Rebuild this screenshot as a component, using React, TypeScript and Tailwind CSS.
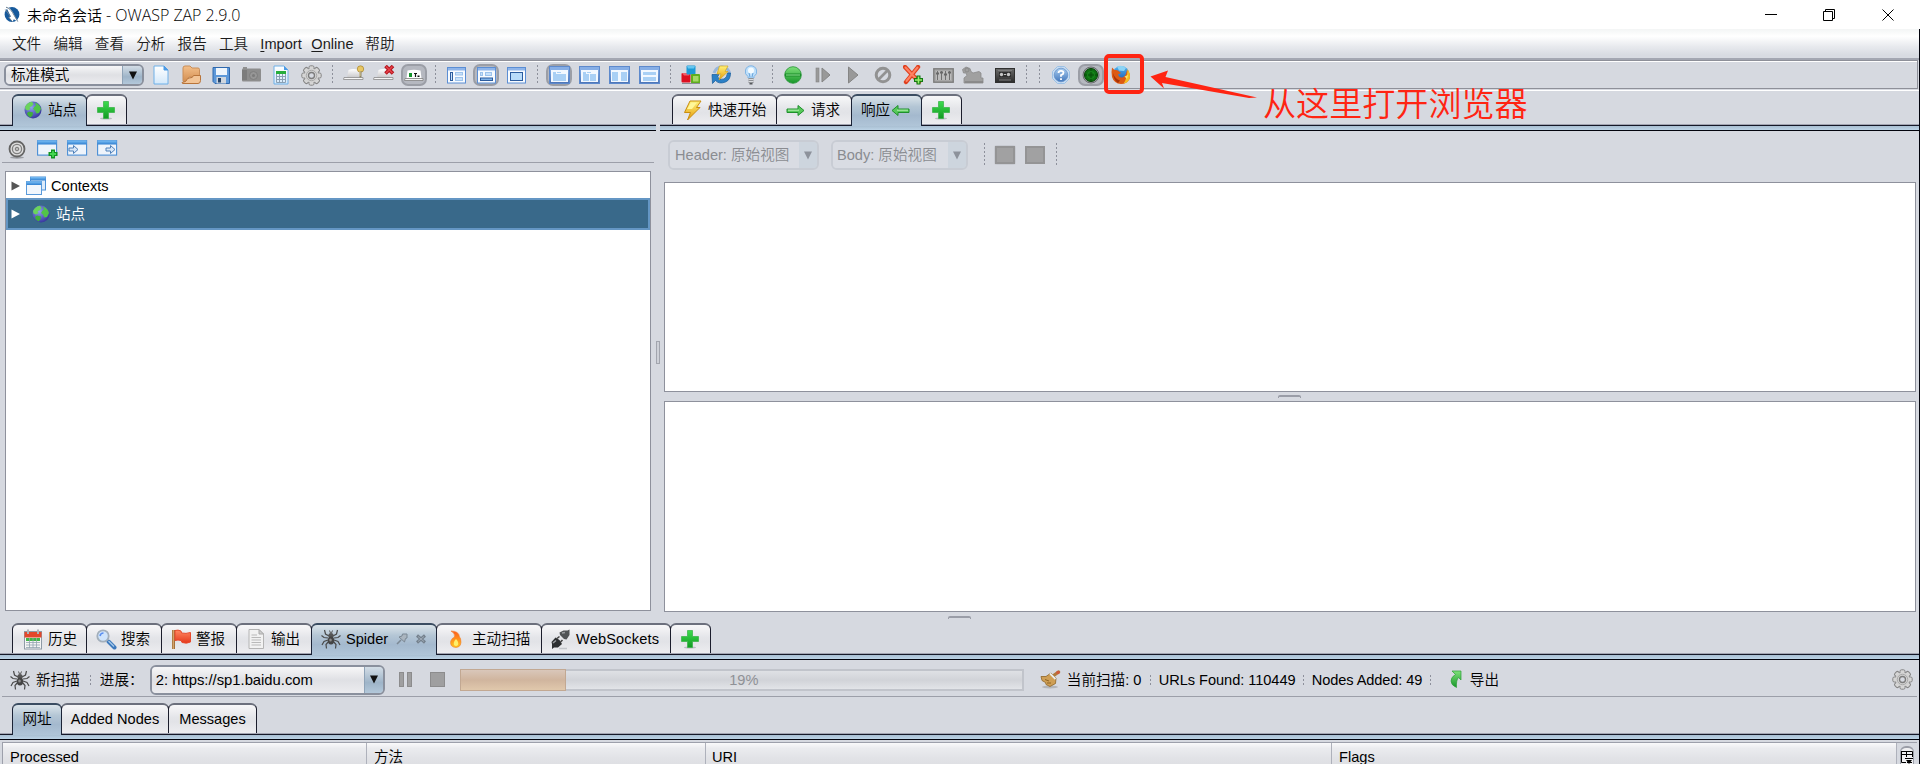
import React from "react";

type Kids = { children?: React.ReactNode };

function Svg({ w = 20, h = 20, children, className = "" }: Kids & { w?: number; h?: number; className?: string }) {
  return (
    <svg width={w} height={h} viewBox={`0 0 ${w} ${h}`} fill="none" className={`shrink-0 ${className}`}>
      {children}
    </svg>
  );
}

function Gradients() {
  const list: [string, string, string][] = [
    ["gDoc", "#ffffff", "#d3e8fa"],
    ["gFolder", "#f3bf8a", "#d08a4c"],
    ["gBlue", "#8ab4ec", "#4a72b4"],
    ["gWin", "#7cc0f6", "#2f7fd0"],
    ["gGreen", "#7fe07a", "#17962a"],
    ["gBolt", "#fff27a", "#e59a08"],
    ["gPlus", "#3ddc4e", "#129a22"],
    ["gHat", "#ffffff", "#c9c9cb"],
    ["gRed", "#ff8a63", "#e5381c"],
    ["gHelp", "#a9cdf0", "#4378bd"],
    ["gFlame", "#ff5a1c", "#ffc81e"],
    ["gFox", "#4fb4f0", "#1c4fa8"],
    ["gTape", "#6a6a6a", "#2c2c2c"],
  ];
  return (
    <svg width="0" height="0" className="absolute">
      <defs>
        {list.map(([id, a, b]) => (
          <linearGradient key={id} id={id} x1="0" y1="0" x2="0" y2="1">
            <stop offset="0" stopColor={a} />
            <stop offset="1" stopColor={b} />
          </linearGradient>
        ))}
        <radialGradient id="gGlobe" cx="0.4" cy="0.35" r="0.7">
          <stop offset="0" stopColor="#8fa2ee" />
          <stop offset="1" stopColor="#33309a" />
        </radialGradient>
      </defs>
    </svg>
  );
}

/* ---------- icons ---------- */

const Zap = () => (
  <Svg w={16} h={17}>
    <circle cx="8" cy="8.5" r="7.4" fill="#175a9c" />
    <path d="M2.2 1.2 6 2.4 9 6.5 13.6 15.6 9.8 13.2 8.6 15.8 5 11.4 6.8 10.6Z" fill="#fff" />
    <path d="M2 1.2C5 2 7 4 8.6 6.6L13.8 15.6M1.4 3.6 6.4 10.4 4.8 11.4 8.4 15.6" stroke="#6b7f92" strokeWidth="1" />
  </Svg>
);
const NewDoc = () => (
  <Svg w={16}>
    <path d="M1 1H11L15 5V19H1Z" fill="url(#gDoc)" stroke="#6fb0e8" />
    <path d="M11 1V5H15Z" fill="#4d9be6" stroke="#4d9be6" />
  </Svg>
);
const Folder = () => (
  <Svg>
    <path d="M2 16V3Q2 1 4 1H9L11 3H17Q18.500 3 18.500 4.500V12H8L5 18Z" fill="url(#gFolder)" stroke="#c98d58" />
    <path d="M1 17.500Q5.500 17 6 14.500Q6.500 13 8.500 13Q12 13 12.500 10.500H19.500V15.500Q19.500 18.500 17 18.500H1.500Z" fill="#f2c496" stroke="#b8743a" />
  </Svg>
);
const Save = () => (
  <Svg w={19}>
    <path d="M1 2.500H17.500V18.500H3L1 16.500Z" fill="#5d98d9" stroke="#2f68ae" />
    <rect x="4" y="3" width="11" height="7" fill="#eef5fc" />
    <rect x="4.500" y="12" width="9.500" height="6.500" fill="#cfd6de" />
    <rect x="6" y="13" width="3" height="4.500" fill="#25446c" />
  </Svg>
);
const Camera = () => (
  <Svg w={21}>
    <rect x="1" y="3.500" width="19" height="13" rx="1" fill="#8d8d8d" />
    <rect x="1" y="5" width="5" height="10" fill="#7c7c7c" />
    <circle cx="12.500" cy="10.500" r="4" fill="#969696" stroke="#7e7e7e" />
    <circle cx="12.500" cy="10.500" r="1.500" fill="#7b7b7b" />
    <rect x="2" y="2" width="4" height="2" fill="#909090" />
  </Svg>
);
const Sheet = () => (
  <Svg w={16}>
    <path d="M1 1H11L15 5V19H1Z" fill="url(#gDoc)" stroke="#6fb0e8" />
    <path d="M11 1V5H15Z" fill="#4d9be6" />
    <rect x="3" y="6" width="10" height="3" fill="#27ad3c" />
    <path d="M3.500 9V17.500H12.500V9M3 11.500H13M3 14.500H13M6.500 9V17M9.500 9V17" stroke="#8aa0b4" />
  </Svg>
);
const Gear = () => (
  <Svg w={21} h={21}>
    {[0, 45, 90, 135].map((a) => (
      <rect key={a} x="8" y="0.800" width="5" height="19.400" rx="1.500" fill="#d6d6d6" stroke="#858585" strokeWidth="1" transform={`rotate(${a} 10.5 10.5)`} />
    ))}
    <circle cx="10.500" cy="10.500" r="7" fill="#d2d2d2" />
    <circle cx="10.500" cy="10.500" r="5.200" stroke="#a0a0a0" strokeWidth="0.800" />
    <circle cx="10.500" cy="10.500" r="3" fill="#d7dae1" stroke="#7c7c7c" strokeWidth="1.300" />
  </Svg>
);
const HatBase = () => (
  <>
    <path d="M4 12.500 5.500 5Q10 3 15.500 5L17 12.500Z" fill="url(#gHat)" />
    <path d="M1 12.500H20V14.500H0.500Z" fill="#f6f6f6" stroke="#8a8a8a" strokeWidth="0.800" />
  </>
);
const HatKey = () => (
  <Svg w={22}>
    <HatBase />
    <circle cx="17.500" cy="4" r="3.200" fill="#e8c765" stroke="#a8842a" strokeWidth="0.700" />
    <path d="M17.500 6V12.500" stroke="#8c8468" strokeWidth="2" />
    <path d="M17 6V11" stroke="#f1dea0" strokeWidth="0.800" />
  </Svg>
);
const HatX = () => (
  <Svg w={22}>
    <HatBase />
    <path d="M12.500 1 20 8.500M20 1 12.500 8.500" stroke="#b3141d" strokeWidth="3.600" />
    <path d="M13 1.500 19.500 8M19.500 1.500 13 8" stroke="#e8434a" strokeWidth="1.500" />
  </Svg>
);
const Terminal = () => (
  <Svg w={22}>
    <path d="M3.500 13.500 4.500 5.500Q11 4 17.500 5.500L18.500 13.500Z" fill="#fff" />
    <path d="M2 13.500H20V15.500H1.500Z" fill="#f6f6f6" stroke="#808080" strokeWidth="0.800" />
    <rect x="6" y="8" width="3" height="4" fill="#14942c" />
    <path d="M11 8.500H14M12.500 8V12" stroke="#111" strokeWidth="1.200" />
    <rect x="14.500" y="10.500" width="2" height="1.500" fill="#111" />
  </Svg>
);
const LayoutFrame = ({ children }: Kids) => (
  <Svg w={19} h={17}>
    <rect x="0.500" y="0.500" width="18" height="15.500" fill="#f7fbff" stroke="#5b8ed4" />
    <rect x="1" y="1" width="17" height="2.500" fill="#8fb5ea" />
    {children}
  </Svg>
);
const Layout1 = () => (
  <LayoutFrame>
    <rect x="3.500" y="5.500" width="2" height="8" fill="#c8e1fa" stroke="#2c5c9e" />
    <rect x="8.500" y="5.500" width="7" height="2.500" fill="#c8e1fa" stroke="#9dc3ec" />
    <rect x="8.500" y="10.500" width="7" height="3" fill="#c8e1fa" stroke="#9dc3ec" />
  </LayoutFrame>
);
const Layout2 = () => (
  <LayoutFrame>
    <rect x="3.500" y="5.500" width="2" height="3" fill="#c8e1fa" stroke="#9dc3ec" />
    <rect x="8.500" y="5.500" width="6" height="3" fill="#c8e1fa" stroke="#9dc3ec" />
    <rect x="3.500" y="11" width="12" height="2.500" fill="#7fb2e8" stroke="#2c5c9e" />
  </LayoutFrame>
);
const Layout3 = () => (
  <LayoutFrame>
    <rect x="3.500" y="5.500" width="12" height="8" fill="#b8dcfa" stroke="#2c5c9e" />
  </LayoutFrame>
);
const PanelFrame = ({ children }: Kids) => (
  <Svg w={21} h={18}>
    <rect width="21" height="18" fill="url(#gBlue)" />
    <rect x="0.500" y="0.500" width="20" height="17" stroke="#5d89cc" />
    <rect x="1" y="1" width="19" height="3" fill="#86aee6" />
    <rect x="2" y="4" width="17" height="12" fill="#f2f8ff" />
    {children}
  </Svg>
);
const Panel1 = () => (
  <PanelFrame>
    <rect x="4" y="8" width="13" height="7" fill="#a9d0f5" />
    <rect x="4" y="6" width="3" height="2" fill="#a9d0f5" />
    <rect x="8" y="6" width="4" height="1" fill="#a9d0f5" />
  </PanelFrame>
);
const Panel2 = () => (
  <PanelFrame>
    <rect x="4" y="8" width="6" height="7" fill="#a9d0f5" />
    <rect x="11" y="8" width="6" height="7" fill="#a9d0f5" />
    <rect x="4" y="6" width="3" height="2" fill="#a9d0f5" />
    <rect x="8" y="6" width="4" height="1" fill="#a9d0f5" />
  </PanelFrame>
);
const Panel3 = () => (
  <PanelFrame>
    <rect x="3" y="6" width="6" height="9" fill="#a9d0f5" />
    <rect x="12" y="6" width="6" height="9" fill="#a9d0f5" />
  </PanelFrame>
);
const Panel4 = () => (
  <PanelFrame>
    <rect x="4" y="6" width="13" height="3" fill="#a9d0f5" />
    <rect x="4" y="11" width="13" height="4" fill="#a9d0f5" />
  </PanelFrame>
);
const Cubes = () => (
  <Svg>
    <rect x="0.500" y="8" width="9" height="9.500" rx="1" fill="#dc1020" />
    <path d="M1 8H9L8 10.500H3Z" fill="#f0606a" />
    <rect x="5.500" y="0.500" width="9" height="9" rx="1" fill="#1d9ad6" />
    <path d="M6 1H14L13 3.500H7Z" fill="#66c6f0" />
    <rect x="10" y="9" width="9" height="9.500" rx="1" fill="#5fae1e" />
    <rect x="12" y="11" width="5.500" height="5.500" fill="#a5d966" />
    <path d="M1 18.500H19" stroke="#8b8e96" />
  </Svg>
);
const Update = () => (
  <Svg w={21}>
    <path d="M3 8Q5 2 11 2Q18 3 18.500 9" stroke="#98b7dc" strokeWidth="3" />
    <path d="M1 9.500H8L6.500 12Q9 15.500 13 14Q16 12.500 16.500 8H19.500Q19.500 15 14.500 17Q8 19.500 4.500 15.500L1.500 18.500Z" fill="#2b80c6" stroke="#145a9a" strokeWidth="0.700" />
    <path d="M8.500 1H17L14 6.500H17L8 15 10 9H6Z" fill="url(#gBolt)" stroke="#d3a81c" strokeWidth="0.700" />
  </Svg>
);
const Bulb = () => (
  <Svg w={14}>
    <path d="M7 0.800A5.800 5.800 0 0 1 10 11.500V13H4V11.500A5.800 5.800 0 0 1 7 0.800Z" fill="#bfe0fb" stroke="#7fb4e4" />
    <circle cx="7" cy="5.500" r="3" fill="#f4fbff" />
    <path d="M5 8 6 12M9 8 8 12" stroke="#4f93d2" strokeWidth="0.800" />
    <rect x="4.500" y="13" width="5" height="5" fill="#8f9296" />
    <path d="M4.500 14.500H9.500M4.500 16.500H9.500" stroke="#d9dbdf" />
    <rect x="5.500" y="18" width="3" height="1.500" fill="#55585c" />
  </Svg>
);
const GreenBall = () => (
  <Svg w={18} h={18}>
    <circle cx="9" cy="9" r="8.300" fill="url(#gGreen)" stroke="#239334" strokeWidth="0.800" />
    <rect x="1" y="7.500" width="16" height="3" fill="#1a8c2a" />
    <rect x="2" y="8.500" width="14" height="1" fill="#8fe392" />
  </Svg>
);
const Step = () => (
  <Svg w={16}>
    <rect x="1" y="3" width="3" height="14" fill="#999" stroke="#858585" strokeWidth="0.600" />
    <path d="M7 3V17L15 10Z" fill="#999" stroke="#858585" />
  </Svg>
);
const Play = () => (
  <Svg w={12}>
    <path d="M1.500 2V18L11 10Z" fill="#999" stroke="#858585" />
  </Svg>
);
const Ban = () => (
  <Svg w={18} h={18}>
    <circle cx="9" cy="9" r="6.800" stroke="#929292" strokeWidth="3" />
    <path d="M4.500 13.500 13.500 4.500" stroke="#929292" strokeWidth="2.600" />
  </Svg>
);
const BreakX = () => (
  <Svg>
    <path d="M2 2 16 17M15 2 3 17" stroke="#e0401f" strokeWidth="4.400" strokeLinecap="round" />
    <path d="M2.500 2.500 15 16M14.500 2.500 3.500 16" stroke="#ff8262" strokeWidth="2" strokeLinecap="round" />
    <path d="M15.500 10.500V19.500M11 15H20" stroke="#127a12" strokeWidth="4" />
    <path d="M15.500 11.500V18.500M12 15H19" stroke="#9af06c" strokeWidth="1.600" />
  </Svg>
);
const Sliders = () => (
  <Svg w={21} h={17}>
    <rect x="0.800" y="1.800" width="19.400" height="13.400" fill="#a8a8a8" stroke="#7c7c7c" strokeWidth="1.400" />
    <rect x="3" y="4" width="15" height="9" fill="#bcbcbc" />
    <path d="M4.500 4V13M8.500 4V13M12.500 4V13M16.500 4V13" stroke="#707070" />
    <path d="M3 6.500H6M7 5.500H10M11 7.500H14M15 5.500H18" stroke="#686868" strokeWidth="1.800" />
  </Svg>
);
const Snail = () => (
  <Svg w={24}>
    <path d="M3 18V13L6 10.500 5 8H2.500L1.500 4.500 5 2 9 3.500 10 6.500 12 8 18 6.500 20 8V13H22V18Z" fill="#a0a0a0" stroke="#8a8a8a" strokeWidth="0.800" />
    <path d="M4 17H22" stroke="#858585" strokeWidth="1.500" />
    <circle cx="6" cy="5" r="2" stroke="#8a8a8a" />
  </Svg>
);
const Tape = () => (
  <Svg w={20} h={17}>
    <rect x="0.500" y="1.500" width="19" height="14" fill="url(#gTape)" stroke="#303030" />
    <rect x="4" y="5" width="12" height="5" fill="#303030" />
    <circle cx="6.500" cy="7.500" r="1.700" fill="#c6c6c6" />
    <circle cx="13.500" cy="7.500" r="1.700" fill="#c6c6c6" />
    <rect x="9" y="7" width="2" height="1" fill="#c6c6c6" />
    <path d="M3 3.500H17M4 13H16" stroke="#7d7d7d" />
  </Svg>
);
const Help = () => (
  <Svg w={18} h={18}>
    <path d="M5.500 0.500H12.500L17.500 5.500V12.500L12.500 17.500H5.500L0.500 12.500V5.500Z" fill="#c7dcf2" stroke="#9cc0e4" />
    <circle cx="9" cy="9" r="6.800" fill="url(#gHelp)" stroke="#5e8cc6" strokeWidth="0.700" />
    <path d="M6.500 7Q6.500 4.800 9 4.800Q11.500 4.800 11.500 6.800Q11.500 8.300 9 9.200V10.800M9 12.200V14" stroke="#fff" strokeWidth="1.800" />
  </Svg>
);
const Radar = () => (
  <Svg w={18} h={18}>
    <circle cx="9" cy="9" r="8" fill="#9da0a3" stroke="#6c6f72" />
    <circle cx="9" cy="9" r="6.500" fill="#0e7212" stroke="#064408" />
    <path d="M9 2V16M2 9H16" stroke="#084c0b" />
    <circle cx="9" cy="9" r="3.500" stroke="#1d8f22" strokeWidth="0.800" />
  </Svg>
);
const Firefox = () => (
  <Svg>
    <circle cx="10" cy="9.500" r="8.500" fill="url(#gFox)" />
    <path d="M6 1.500Q11-0.500 15 3L13 6 8 5.500Z" fill="#8dd4f6" />
    <path d="M1 2.500 3.500 5Q6 4.500 7.500 6L10 8 7 9.500Q8 13 11.500 12.500Q14 12 15 9L16 5Q20 9 18.500 14Q16 19 10 19Q3 18.500 1 12Q0 7 1 2.500Z" fill="#dd5a13" />
    <path d="M16.500 4Q20 9 18.500 14Q16.500 18 12.500 18.500Q16.500 13 16.500 4Z" fill="#f5bd22" />
    <path d="M2 8Q4 14 9 15.500L7 18Q2.500 15.500 2 8Z" fill="#a83208" />
    <path d="M13.500 11.500 17 10 16 14Z" fill="#fbe36a" />
  </Svg>
);
const Globe = () => (
  <Svg w={18} h={18}>
    <circle cx="9" cy="9" r="8.500" fill="url(#gGlobe)" />
    <path d="M1 6Q3 1.500 8 0.800L9.500 3 7.500 5.500 5.500 6 6.500 8 4 9.500 1.500 8.500Z" fill="#6ad45c" />
    <path d="M11 1.500Q16 3 17 8L15 12 12.500 12.500 11 9.500 9 8 10.500 5.500 12 4.500Z" fill="#52c448" />
    <path d="M5 10.500 9 11.500 8.500 14.500 6.500 16.500Q3 14.500 3 12Z" fill="#3fae3c" />
  </Svg>
);
const Plus = () => (
  <Svg w={18} h={19}>
    <ellipse cx="9" cy="17.500" rx="6" ry="1" fill="#b8bcc0" />
    <path d="M6.500 0.500H11.500V6.500H17.500V11.500H11.500V17.500H6.500V11.500H0.500V6.500H6.500Z" fill="url(#gPlus)" stroke="#34b244" strokeWidth="0.700" />
  </Svg>
);
const Target = () => (
  <Svg w={18} h={19}>
    <ellipse cx="9" cy="17.500" rx="7" ry="1.200" fill="#9a9da3" />
    <circle cx="9" cy="9" r="7.500" fill="#dedede" stroke="#646464" strokeWidth="1.800" />
    <circle cx="9" cy="9" r="4.600" stroke="#808080" strokeWidth="1.300" />
    <circle cx="9" cy="9" r="1.800" fill="#bbb" stroke="#777" />
  </Svg>
);
const WinFrame = () => (
  <>
    <rect x="0.600" y="1.600" width="19" height="14.500" fill="#eef4fb" stroke="#4a8fd6" strokeWidth="1.100" />
    <rect x="0.500" y="1.500" width="19" height="4" fill="url(#gWin)" />
  </>
);
const WinAdd = () => (
  <Svg w={21}>
    <WinFrame />
    <path d="M16 10.500V19.500M11.500 15H20.500" stroke="#129322" strokeWidth="4" />
    <path d="M16 12V18M13 15H19" stroke="#45d651" strokeWidth="1.800" />
  </Svg>
);
const Arr = "M2 9H6.500V6.500L11 10.500 6.500 14.500V12H2Z";
const WinIn = () => (
  <Svg w={21}>
    <WinFrame />
    <path d={Arr} fill="#d6e6f8" stroke="#4f80b8" />
  </Svg>
);
const WinOut = () => (
  <Svg w={21}>
    <WinFrame />
    <path d={Arr} transform="translate(7 0)" fill="#d6e6f8" stroke="#4f80b8" />
  </Svg>
);
const Contexts = () => (
  <Svg>
    <rect x="4.500" y="1" width="15" height="13" fill="#dcebfa" stroke="#4a8fd6" />
    <rect x="4.500" y="1" width="15" height="3.500" fill="url(#gWin)" />
    <rect x="0.500" y="5.500" width="15" height="13" fill="#f1f6fc" stroke="#5a9ada" />
    <rect x="0.500" y="5.500" width="15" height="3.500" fill="url(#gWin)" />
  </Svg>
);
const Bolt = () => (
  <Svg w={19} h={21}>
    <path d="M7 1H18L13.500 7.500H17L4.500 20 7.500 12.500H1.500Z" fill="url(#gBolt)" stroke="#c98d10" />
    <path d="M8 2.500H14L9 9H4Z" fill="#fff79a" />
  </Svg>
);
const ArrowR = ({ flip = false }: { flip?: boolean }) => (
  <Svg w={19} h={13} className={flip ? "-scale-x-100" : ""}>
    <path d="M1 5H12V1.500L18 6.500 12 11.500V8.500H1Z" fill="#57c95a" stroke="#1f8f2c" />
    <path d="M2 6.200H13" stroke="#b5f0b0" />
  </Svg>
);
const Calendar = () => (
  <Svg w={18} h={21}>
    <rect x="0.500" y="2.500" width="17" height="17.500" fill="#f4f4f4" stroke="#8e9aa6" />
    <rect x="0.500" y="3" width="17" height="5.500" fill="#e3472b" />
    <path d="M4 0.500V5M14 0.500V5" stroke="#b0b4b8" strokeWidth="2" />
    <rect x="2" y="9" width="14" height="3" fill="#42b548" />
    <path d="M2 13.500H16M2 16H16M2 18.500H16M5.500 9V19M9 9V19M12.500 9V19" stroke="#93a5b0" strokeWidth="0.800" />
  </Svg>
);
const Search = () => (
  <Svg w={21} h={21}>
    <path d="M12.500 12.500 18.500 18.500" stroke="#3d79bd" strokeWidth="4" strokeLinecap="round" />
    <path d="M12.500 12 18 17.500" stroke="#a9cbea" strokeWidth="1.200" />
    <circle cx="7" cy="7" r="5.700" fill="#cfe4fb" stroke="#a3afbb" strokeWidth="1.800" />
    <path d="M4 7Q4.500 4 7.500 4" stroke="#5b8ff0" strokeWidth="1.600" />
  </Svg>
);
const Flag = () => (
  <Svg w={21} h={21}>
    <path d="M2.500 1V20" stroke="#a4713a" strokeWidth="3" />
    <path d="M2.300 1V20" stroke="#dcb27c" strokeWidth="1" />
    <path d="M4 1.500Q7 0.500 10 2L10.500 4Q15 5 19.500 3.500V13Q16 15 11 13.500L10 11.500Q7 10.500 4 11.500Z" fill="url(#gRed)" stroke="#e8492c" />
  </Svg>
);
const Output = () => (
  <Svg w={17} h={21}>
    <path d="M1 0.500H11L15.500 5V19.500H1Z" fill="#f2f2f2" stroke="#b4b4b4" />
    <path d="M11 0.500V5H15.500Z" fill="#cfcfcf" stroke="#aaa" />
    <path d="M3.500 6H9M3.500 8.500H13M3.500 11H13M3.500 13.500H13M3.500 16H13" stroke="#b9b9b9" />
  </Svg>
);
const Spider = () => (
  <Svg w={20} h={20}>
    <path
      d="M8 7 4.500 5 3.500 1M12 7 15.500 5 16.500 1M7 9 3 8.500 0.500 6.500M13 9 17 8.500 19.500 6.500M7 11 3 12.500 1 16M13 11 17 12.500 19 16M8 12 5 15.500 5.500 19.500M12 12 15 15.500 14.500 19.500"
      stroke="#4a4a4a"
      strokeWidth="1.200"
    />
    <ellipse cx="10" cy="6.500" rx="2.600" ry="2.600" fill="#555" />
    <ellipse cx="10" cy="11.500" rx="3.200" ry="4" fill="#444" />
    <path d="M8.500 1.500 9.500 4M11.500 1.500 10.500 4" stroke="#555" />
    <ellipse cx="9.500" cy="11" rx="1.300" ry="1.600" fill="#8c8c8c" />
  </Svg>
);
const Pin = () => (
  <Svg w={12} h={12}>
    <path d="M6.500 1H11V5L9.500 5.500 8.500 9 3 4 6 3Z" fill="#aab5bf" stroke="#7b8894" />
    <path d="M5 7 1 11" stroke="#7b8894" strokeWidth="1.600" />
  </Svg>
);
const CloseX = () => (
  <Svg w={10} h={10}>
    <path d="M1 1.500 9 8.500M9 1.500 1 8.500" stroke="#74818d" strokeWidth="3" />
    <path d="M2 2.500 8 7.500M8 2.500 2 7.500" stroke="#a9b5c0" strokeWidth="0.800" />
  </Svg>
);
const Flame = () => (
  <Svg w={12} h={18}>
    <path d="M1 1Q9 1 9.500 7L10.500 8.500Q12.500 17 6 17.500Q-0.500 17 0.800 11Q2 8 4.500 7Q5.500 3.500 1 1Z" fill="url(#gFlame)" stroke="#ee7a28" strokeWidth="0.600" />
    <path d="M6 9Q9 12 8 15Q6 17 4 15Q3 12 6 9Z" fill="#fff06a" />
  </Svg>
);
const Plug = () => (
  <Svg w={21} h={21}>
    <path d="M19.500 0.500V6L16.500 10.500 14 10 10 6 9.500 3.500 13.500 1.500 17.500 1.500Z" fill="#505356" />
    <path d="M2 20V15L1.500 13 5.500 8.500 9.500 11 12 15 8 18.500H4Z" fill="#2d2f31" />
    <path d="M7 9.500 9.500 7.500M10.500 13 12.500 11" stroke="#444" strokeWidth="1.600" />
    <path d="M3 14 6 11.500M12 4 15 3.500" stroke="#9a9da0" strokeWidth="1.500" />
    <path d="M9 19.500H17" stroke="#c3c6ca" strokeWidth="1.500" />
  </Svg>
);
const Broom = () => (
  <Svg w={21} h={19}>
    <ellipse cx="10" cy="17" rx="8" ry="1.500" fill="#b3b5b9" />
    <path d="M13 6 18.500 2" stroke="#b07a3c" strokeWidth="3.400" strokeLinecap="round" />
    <circle cx="18" cy="2.500" r="1.800" fill="#cf5a3a" />
    <path d="M1 6.500 6 6.500 11 3 16 8 15.500 13.500 10 16.500 6 14.500 5.500 12.500 2 10.500Z" fill="#cf9f55" stroke="#8e6426" strokeWidth="0.800" />
    <path d="M10 3.500 15.500 9" stroke="#e9ecef" strokeWidth="1.800" />
    <path d="M5 9.500 9 11M7 13 11 13" stroke="#8e6426" />
  </Svg>
);
const Export = () => (
  <Svg w={12} h={19}>
    <path d="M2 1H11V10L8.500 7.500Q6 10 6.500 17.500 1 15 1 11Q1 7 5.500 4.500Z" fill="url(#gGreen)" stroke="#2d9e38" strokeWidth="0.700" />
  </Svg>
);

/* ---------- building blocks ---------- */

const Cell = ({ children }: Kids) => <div className="flex w-[30px] shrink-0 items-center justify-center">{children}</div>;
const Toggled = ({ children }: Kids) => (
  <div className="flex w-[30px] shrink-0 items-center justify-center">
    <div className="flex h-[22px] w-[26px] shrink-0 items-center justify-center rounded-[7px] border-2 border-[#9b9ea6] bg-[#b5b8c0]">{children}</div>
  </div>
);
const Dots = ({ className }: { className: string }) => (
  <div className={`flex shrink-0 justify-center ${className}`}>
    <div className="h-full w-px bg-[repeating-linear-gradient(to_bottom,#8d909b_0px,#8d909b_2px,#d6d9e0_2px,#d6d9e0_4px)]" />
  </div>
);

function Tab({ active = false, className, children }: Kids & { active?: boolean; className: string }) {
  return (
    <div
      className={`flex shrink-0 items-center rounded-t-[6px] border-x border-t-2 ${
        active
          ? "relative -mb-[2px] h-[32px] border-x-[#1b2336] border-t-[#3b4d62] bg-[linear-gradient(to_bottom,#dbe4ea_0%,#b4c6d5_35%,#a4b9ce_65%,#b0c5d8_100%)] pb-[2px]"
          : "h-[30px] border-x-[#1b1d2c] border-t-[#6c707d] bg-[linear-gradient(to_bottom,#f8f8f9_0%,#e4e5e9_45%,#e2e3e7_60%,#ededf0_100%)]"
      } ${className}`}
    >
      {children}
    </div>
  );
}
const Stripe = () => (
  <div className="h-[7px] shrink-0 border-t border-[#a2a4b1]">
    <div className="h-[6px] border-y border-t-[#161828] border-b-[#02030c] bg-[linear-gradient(to_bottom,#a9bfd2,#bcd3e6)]" />
  </div>
);

const Combo = ({ label, className, off = false, arrow }: { label: React.ReactNode; className: string; off?: boolean; arrow: string }) => (
  <div className={`flex shrink-0 overflow-hidden rounded-[6px] border-2 ${off ? "border-[#c8ccd4] text-[#8a8c91]" : "border-[#8a909d] text-black"} ${className}`}>
    <div className={`flex min-w-0 flex-1 items-center whitespace-nowrap ${off ? "bg-[#d9dce3]" : "bg-[linear-gradient(to_bottom,#f7f7f8,#dfe0e4_50%,#ececef)]"}`}>{label}</div>
    <div className={`flex shrink-0 items-center justify-center ${off ? "bg-[#cdd5de]" : "border-l border-[#8fa3b7] bg-[linear-gradient(to_bottom,#d3dde6,#9eb4c8_60%,#b3c8da)]"} ${arrow}`}>
      <Svg w={8} h={9}>
        <path d="M0 0.500H8L4 8.500Z" fill={off ? "#8d929b" : "#111"} />
      </Svg>
    </div>
  </div>
);

const Col = ({ className, children }: Kids & { className: string }) => (
  <div className={`h-full shrink-0 overflow-hidden border-r border-[#aeb1bb] bg-[linear-gradient(to_bottom,#fafafb_0%,#ebecef_25%,#e2e3e7_70%,#dfe0e4_100%)] pt-[5px] leading-[18px] ${className}`}>{children}</div>
);

export default function App() {
  return (
    <div className="relative flex h-[764px] w-[1920px] flex-col overflow-hidden bg-[#d6d9e0] font-['Liberation_Sans','Noto_Sans_CJK_SC_DemiLight','Noto_Sans_CJK_SC',sans-serif] text-[14.6px] font-[350] leading-[20px] text-black">
      <Gradients />

      {/* title bar */}
      <header className="flex h-[29px] shrink-0 items-center bg-white pl-[4px]">
        <Zap />
        <div className="ml-[7px] flex flex-1 items-baseline whitespace-pre">
          <span className="font-['Noto_Sans_CJK_SC_DemiLight','Noto_Sans_CJK_SC',sans-serif] text-[15px]">未命名会话</span>
          <span className="font-['Open_Sans',sans-serif] text-[16px] font-[350] tracking-[-0.05px]"> - OWASP ZAP 2.9.0</span>
        </div>
        <div className="flex items-center pr-[26px]">
          <Svg w={12} h={12}><path d="M0 5.500H12" stroke="#000" /></Svg>
          <Svg w={12} h={12} className="ml-[46px]"><path d="M0.500 2.500H9.500V11.500H0.500ZM2.500 2.500V0.500H11.500V9.500H9.500" stroke="#000" /></Svg>
          <Svg w={12} h={12} className="ml-[47px]"><path d="M0.500 0.500 11.500 11.500M11.500 0.500 0.500 11.500" stroke="#000" /></Svg>
        </div>
      </header>

      <div className="flex min-h-0 flex-1 flex-col border-r border-[#02030c]">
        {/* menu */}
        <nav className="flex h-[31px] shrink-0 items-center border-b-2 border-[#a4a7b2] bg-[linear-gradient(to_bottom,#f3f5f5_0%,#ffffff_25%,#e8eaee_60%,#d8dbe2_90%)] pl-[12px] text-[#1c1c1c]">
          {["文件", "编辑", "查看", "分析", "报告", "工具"].map((t) => (
            <span key={t} className="w-[41.4px] whitespace-nowrap">{t}</span>
          ))}
          <span className="w-[51px]"><u className="underline-offset-2">I</u>mport</span>
          <span className="w-[54px]"><u className="underline-offset-2">O</u>nline</span>
          <span>帮助</span>
        </nav>

        {/* main toolbar */}
        <div className="h-[31px] shrink-0 border-b border-b-white pr-px">
          <div className="h-[29px] border-y border-r border-[#8e9099]">
            <div className="flex h-[27px] items-center border-t border-white pl-[4px]">
              <Combo label={<span className="pl-[5px]">标准模式</span>} className="h-[22px] w-[140px]" arrow="w-[20px]" />
              <div className="ml-[2px] flex h-full items-center">
                <Cell><NewDoc /></Cell>
                <Cell><Folder /></Cell>
                <Cell><Save /></Cell>
                <Cell><Camera /></Cell>
                <Cell><Sheet /></Cell>
                <Cell><Gear /></Cell>
                <Dots className="h-[20px] w-[13px]" />
                <Cell><HatKey /></Cell>
                <Cell><HatX /></Cell>
                <Toggled><Terminal /></Toggled>
                <Dots className="h-[20px] w-[12px]" />
                <Cell><Layout1 /></Cell>
                <Toggled><Layout2 /></Toggled>
                <Cell><Layout3 /></Cell>
                <Dots className="h-[20px] w-[13px]" />
                <Toggled><Panel1 /></Toggled>
                <Cell><Panel2 /></Cell>
                <Cell><Panel3 /></Cell>
                <Cell><Panel4 /></Cell>
                <Dots className="h-[20px] w-[12px]" />
                <Cell><Cubes /></Cell>
                <Cell><Update /></Cell>
                <Cell><Bulb /></Cell>
                <Dots className="h-[20px] w-[12px]" />
                <Cell><GreenBall /></Cell>
                <Cell><Step /></Cell>
                <Cell><Play /></Cell>
                <Cell><Ban /></Cell>
                <Cell><BreakX /></Cell>
                <Cell><Sliders /></Cell>
                <Cell><Snail /></Cell>
                <div className="ml-[2px] flex"><Cell><Tape /></Cell></div>
                <Dots className="h-[20px] w-[12px]" />
                <Dots className="h-[20px] w-[14px]" />
                <Cell><Help /></Cell>
                <Toggled><Radar /></Toggled>
                <Cell><Firefox /></Cell>
              </div>
            </div>
          </div>
        </div>

        {/* work area */}
        <div className="flex h-[521px] shrink-0">
          <section className="flex w-[656px] shrink-0 flex-col">
            <div className="flex h-[33px] shrink-0 items-end pl-[12px]">
              <Tab active className="w-[75px] pl-[11px]">
                <Globe /><span className="ml-[6px]">站点</span>
              </Tab>
              <Tab className="-ml-px w-[41px] pl-[10px]"><Plus /></Tab>
            </div>
            <Stripe />
            <div className="mr-[2px] ml-[2px] flex h-[32px] shrink-0 items-center border-b border-[#9c9fa9] pt-[5px] pl-[6px]">
              <Target />
              <div className="ml-[11px] flex gap-[9px]"><WinAdd /><WinIn /><WinOut /></div>
            </div>
            <div className="mt-[8px] ml-[5px] flex h-[440px] w-[646px] flex-col border border-[#8e919c] bg-white">
              <div className="flex h-[26px] items-center pt-px pl-[5px]">
                <Svg w={9} h={10}><path d="M0.500 0.500V9.500L9 5Z" fill="#555" /></Svg>
                <span className="ml-[6px]"><Contexts /></span>
                <span className="ml-[5px]">Contexts</span>
              </div>
              <div className="flex h-[32px] items-center border-2 border-[#6496c4] bg-[#39698a] pl-[3px] text-white">
                <Svg w={9} h={10}><path d="M0.500 0.500V9.500L9 5Z" fill="#fff" /></Svg>
                <span className="ml-[12px]"><Globe /></span>
                <span className="ml-[6px]">站点</span>
              </div>
            </div>
          </section>

          {/* divider */}
          <div className="flex w-[4px] shrink-0 flex-col">
            <div className="mt-[250px] h-[23px] border border-[#a2a5ae] bg-[#ced1d8]" />
          </div>

          <section className="flex min-w-0 flex-1 flex-col">
            <div className="flex h-[33px] shrink-0 items-end pl-[12px]">
              <Tab className="w-[105px] pl-[10px]"><Bolt /><span className="ml-[6px] whitespace-nowrap">快速开始</span></Tab>
              <Tab className="-ml-px w-[76px] pl-[9px]"><ArrowR /><span className="ml-[6px] whitespace-nowrap">请求</span></Tab>
              <Tab active className="-ml-px w-[71px] pl-[9px]"><span className="whitespace-nowrap">响应</span><span className="ml-px"><ArrowR flip /></span></Tab>
              <Tab className="-ml-px w-[41px] pl-[10px]"><Plus /></Tab>
            </div>
            <Stripe />
            <div className="flex h-[51px] shrink-0 items-start pt-[9px] pl-[8px]">
              <Combo off className="h-[30px] w-[151px]" arrow="w-[18px]" label={<span className="pl-[5px]">Header: 原始视图</span>} />
              <Combo off className="ml-[12px] h-[30px] w-[137px]" arrow="w-[18px]" label={<span className="pl-[4px]">Body: 原始视图</span>} />
              <Dots className="mt-[3px] ml-[9px] h-[24px] w-[14px]" />
              <div className="mt-[5px] ml-[3px] flex h-[20px] w-[22px] items-center justify-center rounded-[3px] bg-[#c8cbd2]"><div className="h-[18px] w-[20px] border-2 border-[#949495] bg-[#a1a1a2]" /></div>
              <div className="mt-[6px] ml-[9px] h-[18px] w-[20px] border-2 border-[#949495] bg-[#a1a1a2]" />
              <Dots className="mt-[3px] ml-[4px] h-[24px] w-[14px]" />
            </div>
            <div className="ml-[4px] h-[210px] w-[1252px] shrink-0 border border-[#8e919c] bg-white" />
            <div className="flex h-[9px] shrink-0 items-center pl-[618px]">
              <div className="h-[3px] w-[23px] rounded-t-[2px] border-x border-t-2 border-[#9a9da7]" />
            </div>
            <div className="ml-[4px] h-[211px] w-[1252px] shrink-0 border border-[#8e919c] bg-white" />
          </section>
        </div>

        {/* horizontal divider */}
        <div className="flex h-[11px] shrink-0 items-start pt-[4px] pl-[948px]">
          <div className="h-[3px] w-[23px] rounded-t-[2px] border-x border-t-2 border-[#9a9da7]" />
        </div>

        {/* bottom panel */}
        <div className="flex h-[30px] shrink-0 items-end pl-[12px]">
          <Tab className="w-[75px] pl-[11px]"><Calendar /><span className="ml-[6px] whitespace-nowrap">历史</span></Tab>
          <Tab className="-ml-px w-[76px] pl-[9px]"><Search /><span className="ml-[4px] whitespace-nowrap">搜索</span></Tab>
          <Tab className="-ml-px w-[76px] pl-[9px]"><Flag /><span className="ml-[4px] whitespace-nowrap">警报</span></Tab>
          <Tab className="-ml-px w-[76px] pl-[11px]"><Output /><span className="ml-[6px] whitespace-nowrap">输出</span></Tab>
          <Tab active className="-ml-px w-[126px] pl-[9px]">
            <Spider /><span className="ml-[5px] w-[43px] whitespace-nowrap">Spider</span>
            <span className="ml-[7px]"><Pin /></span><span className="ml-[8px]"><CloseX /></span>
          </Tab>
          <Tab className="-ml-px w-[106px] pl-[13px]"><Flame /><span className="ml-[10px] whitespace-nowrap">主动扫描</span></Tab>
          <Tab className="-ml-px w-[130px] pl-[8px]"><Plug /><span className="ml-[5px] whitespace-nowrap tracking-[0.15px]">WebSockets</span></Tab>
          <Tab className="-ml-px w-[41px] pl-[10px]"><Plus /></Tab>
        </div>
        <Stripe />

        <div className="mr-[2px] ml-[2px] flex h-[37px] shrink-0 items-center whitespace-nowrap border-b border-[#9c9fa9] pt-[3px] pl-[8px]">
          <Spider />
          <span className="ml-[6px]">新扫描</span>
          <Dots className="ml-[5px] h-[10px] w-[12px]" />
          <span className="ml-[3px] w-[50px]">进展：</span>
          <Combo className="h-[30px] w-[235px]" arrow="w-[19px]" label={<span className="pt-px pl-[4px] text-[14.8px]">2: https://sp1.baidu.com</span>} />
          <div className="ml-[14px] flex gap-[3px]">
            <div className="h-[15px] w-[5px] border border-[#8c8c8d] bg-[#9f9fa0]" />
            <div className="h-[15px] w-[5px] border border-[#8c8c8d] bg-[#9f9fa0]" />
          </div>
          <div className="ml-[18px] h-[15px] w-[15px] border border-[#8c8c8d] bg-[#9f9fa0]" />
          <div className="relative ml-[15px] flex h-[22px] w-[564px] items-center justify-center border-2 border-[#c1c4cb] bg-[linear-gradient(to_bottom,#dfe1e5_0%,#d1d3d8_50%,#e2e4e8_100%)] text-[#8f9196]">
            <div className="absolute -top-[2px] -left-[2px] h-[22px] w-[106px] border border-[#c2a892] bg-[linear-gradient(to_bottom,#d9c7ba_0%,#d0b59e_50%,#e0c8ac_100%)]" />
            <span className="relative left-[2px]">19%</span>
          </div>
          <div className="ml-[16px]"><Broom /></div>
          <span className="ml-[6px] w-[76px]">当前扫描: 0</span>
          <Dots className="ml-[2px] h-[10px] w-[12px]" />
          <span className="ml-[2px] w-[138px] tracking-[-0.05px]">URLs Found: 110449</span>
          <Dots className="ml-[1px] h-[10px] w-[12px]" />
          <span className="ml-[2px] w-[112px] tracking-[-0.1px]">Nodes Added: 49</span>
          <Dots className="ml-[1px] h-[10px] w-[12px]" />
          <span className="ml-[13px]"><Export /></span>
          <span className="ml-[8px]">导出</span>
          <div className="mr-[4px] ml-auto"><Gear /></div>
        </div>

        <div className="flex h-[36px] shrink-0 items-end pl-[12px]">
          <Tab active className="w-[50px] justify-center">网址</Tab>
          <Tab className="-ml-px w-[108px] justify-center whitespace-nowrap">Added Nodes</Tab>
          <Tab className="-ml-px w-[89px] justify-center whitespace-nowrap">Messages</Tab>
        </div>
        <Stripe />

        <div className="mt-[2px] mr-[2px] ml-[2px] flex h-[22px] shrink-0 border-t border-l border-[#9da0ab]">
          <Col className="w-[364px] pl-[7px]">Processed</Col>
          <Col className="w-[339px] pl-[7px]">方法</Col>
          <Col className="w-[626px] pl-[6px]">URI</Col>
          <Col className="w-[565px] pl-[7px]">Flags</Col>
          <div className="flex flex-1 justify-center pt-[3px]">
            <div className="flex h-[24px] w-[14px] justify-center rounded-t-[6px] border-x border-t-2 border-[#9b9ea8] bg-[#f0f0f2]">
              <Svg w={12} h={18}>
                <path d="M0.500 3.500H11.500V9M0.500 3V14.500H5M0.500 6.500H11.500M5.500 3.500V9M4 10.500H12M6 14.500H11" stroke="#000" />
                <path d="M5 12H11L8 16Z" fill="#000" />
              </Svg>
            </div>
          </div>
        </div>
      </div>

      {/* annotation */}
      <div className="absolute top-[54px] left-[1104px] h-[40px] w-[40px] rounded-[5px] border-4 border-[#ff2412]" />
      <svg className="absolute top-[69px] left-[1150px]" width="110" height="34" viewBox="0 0 110 34">
        <path d="M0.500 7.500 18 1.500 15.500 8 107 28.500 99 29 12 14 14 19.500Z" fill="#ff2412" />
      </svg>
      <div className="absolute top-[84px] left-[1263px] whitespace-nowrap text-[33.100px] font-normal leading-[42px] text-[#ff2412]">从这里打开浏览器</div>
    </div>
  );
}
